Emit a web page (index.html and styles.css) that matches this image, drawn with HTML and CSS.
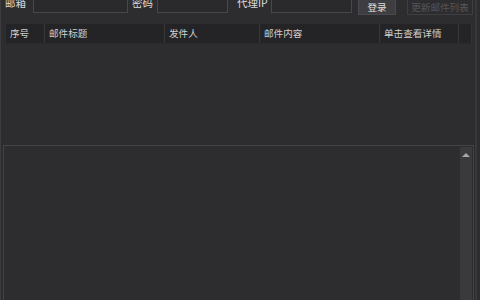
FILE: index.html
```html
<!DOCTYPE html>
<html>
<head>
<meta charset="utf-8">
<link rel="stylesheet" href="styles.css">
</head>
<body>
<div class="window">
  <div class="form">
    <span class="label l1">邮箱</span>
    <span class="input i1"></span>
    <span class="label l2">密码</span>
    <span class="input i2"></span>
    <span class="label l3">代理IP</span>
    <span class="input i3"></span>
    <span class="btn login">登录</span>
    <span class="btn refresh">更新邮件列表</span>
  </div>
  <div class="table">
    <div class="thead">
      <div class="th c1">序号</div>
      <div class="th c2">邮件标题</div>
      <div class="th c3">发件人</div>
      <div class="th c4">邮件内容</div>
      <div class="th c5">单击查看详情</div>
      <div class="th c6"></div>
    </div>
    <div class="tbody"></div>
  </div>
  <div class="log">
    <div class="log-body"></div>
    <div class="scrollbar">
      <div class="arrow"></div>
    </div>
  </div>
</div>
</body>
</html>
```
FILE: styles.css
```css
html, body {
  margin: 0;
  padding: 0;
  background: #2d2d30;
  overflow: hidden;
}
body {
  font-family: "Noto Sans CJK SC", "Noto Sans", sans-serif;
  color: #d4d4d4;
}
.window {
  width: 480px;
  height: 300px;
  box-sizing: border-box;
  border-left: 1px solid #3c3c3f;
  position: relative;
  display: flex;
  flex-direction: column;
  padding-right: 4px;
}
.window::after {
  content: "";
  position: absolute;
  top: 0;
  bottom: 0;
  left: 474px;
  width: 2px;
  background: #38383b;
}
.form {
  display: flex;
  align-items: center;
  height: 26px;
  margin-top: -11px;
  padding-left: 4px;
}
.label {
  font-size: 10.5px;
  line-height: 14px;
  padding-top: 2px;
  white-space: nowrap;
  color: #dcdcdc;
}
.input {
  height: 22px;
  box-sizing: border-box;
  border: 1px solid #48484b;
  background: #2a2a2c;
}
.l1 { width: 28px; }
.i1 { width: 95px; }
.l2 { margin-left: 4px; width: 25px; }
.i2 { width: 71px; }
.l3 { margin-left: 9px; width: 34px; }
.i3 { width: 81px; }
.btn {
  height: 26px;
  box-sizing: border-box;
  display: flex;
  align-items: center;
  justify-content: center;
  font-size: 9.6px;
  padding-top: 9px;
  white-space: nowrap;
}
.login {
  margin-left: 6px;
  width: 38px;
  background: #3e3e42;
  border: 1px solid #4a4a4e;
  color: #e0e0e0;
}
.refresh {
  margin-left: 11px;
  width: 66px;
  border: 1px solid #3e3e41;
  background: #2d2d30;
  color: #55555a;
}
.table {
  margin-top: 9px;
  margin-left: 5px;
  width: 466px;
  height: 117px;
  display: flex;
  flex-direction: column;
}
.thead {
  display: flex;
  height: 19px;
  background: #242426;
  border-bottom: 1px solid #29292b;
}
.th {
  box-sizing: border-box;
  border-right: 1px solid #38383b;
  font-size: 9.6px;
  line-height: 19px;
  padding-left: 4px;
  color: #d0d0d0;
  white-space: nowrap;
}
.c1 { width: 39px; }
.c2 { width: 120px; }
.c3 { width: 95px; }
.c4 { width: 120px; }
.c5 { width: 79px; }
.c6 { width: 13px; border-right: 1px solid #333336; }
.tbody { flex: 1; }
.log {
  margin-top: 4px;
  margin-left: 2px;
  width: 471px;
  flex: 1;
  box-sizing: border-box;
  border: 1px solid #434346;
  border-bottom: none;
  display: flex;
  padding-top: 1px;
}
.log-body { flex: 1; }
.scrollbar {
  width: 12px;
  margin-right: 1px;
  background: #3a3a3d;
  display: flex;
  justify-content: center;
  padding-top: 6px;
  box-sizing: border-box;
}
.arrow {
  width: 0;
  height: 0;
  border-left: 4px solid transparent;
  border-right: 4px solid transparent;
  border-bottom: 4px solid #a8a8a8;
}
```
